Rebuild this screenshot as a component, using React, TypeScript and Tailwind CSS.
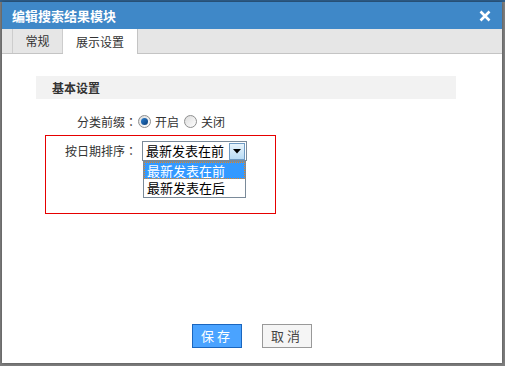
import React from "react";

const font = { fontFamily: '"Noto Sans CJK SC", "Noto Sans", sans-serif' };
const colon = { fontFamily: '"Noto Sans CJK TC", "Noto Sans CJK SC", sans-serif' };

function Radio({ checked }: { checked?: boolean }) {
  return (
    <span className="inline-flex h-[13px] w-[13px] items-center justify-center rounded-full border border-[#8e8f8f] bg-gradient-to-br from-[#dcdcdc] to-[#ffffff]">
      {checked && (
        <span className="h-[7px] w-[7px] rounded-full bg-gradient-to-br from-[#2b7fd0] to-[#0b3f7a]" />
      )}
    </span>
  );
}

export default function App() {
  return (
    <div className="relative h-[366px] w-[505px] overflow-hidden bg-[#7f7f7f]" style={font}>
      <div className="absolute left-0 top-0 h-[2px] w-full bg-[#2f5f8c]" />
      <div className="absolute left-[2px] top-[2px] flex h-[361px] w-[500px] flex-col bg-white shadow-[0_0_3px_rgba(0,0,0,0.4)]">
        {/* title */}
        <div className="flex h-[27px] items-center justify-between bg-[#3f88c8] pl-[10px] pr-[11px]">
          <span className="text-[13px] font-bold text-white">编辑搜索结果模块</span>
          <svg width="12" height="12" viewBox="0 0 12 12">
            <path d="M1.5 1.5 L10.5 10.5 M10.5 1.5 L1.5 10.5" stroke="#fff" strokeWidth="2.6" />
          </svg>
        </div>

        {/* tabs */}
        <div className="flex h-[25px] items-end border-b border-[#c4c4c4] bg-[#e6e6e6] pl-[10px]">
          <div className="flex h-[24px] w-[51px] items-center justify-center border-l border-r border-[#cdcdcd] text-[12px] text-[#333]">
            常规
          </div>
          <div className="-mb-px flex h-[25px] w-[75px] items-center justify-center border-r border-[#c4c4c4] bg-white text-[12px] text-[#333]">
            展示设置
          </div>
        </div>

        {/* body */}
        <div className="px-[34px] pt-[22px]">
          <div className="flex h-[23px] w-[420px] items-center bg-[#f2f2f2] pl-[16px] text-[12px] font-bold text-[#333]">
            基本设置
          </div>

          <div className="mt-[14px] flex h-[17px] items-center text-[12px] text-[#333]">
            <span className="w-[101px] text-right">
              分类前缀<span style={colon}>：</span>
            </span>
            <span className="ml-[1px] flex items-center gap-[4px]">
              <Radio checked />
              <span>开启</span>
            </span>
            <span className="ml-[5px] flex items-center gap-[4px]">
              <Radio />
              <span>关闭</span>
            </span>
          </div>

          <div className="ml-[9px] mt-[5px] h-[79px] w-[231px] border border-[#e60000] pt-[5px]">
            <div className="flex items-center text-[12px] text-[#333]">
              <span className="w-[91px] text-right">
                按日期排序<span style={colon}>：</span>
              </span>
              <div className="relative ml-[5px]">
                <div className="flex h-[20px] w-[105px] items-center border border-[#7a8a99] bg-white pl-[3px] text-[13px] text-black">
                  <span className="flex-1">最新发表在前</span>
                  <span className="mr-px flex h-[17px] w-[16px] items-center justify-center border border-[#6f9bc4] bg-gradient-to-b from-[#e8f4fc] to-[#b9dcf5]">
                    <svg width="8" height="5" viewBox="0 0 8 5">
                      <path d="M0 0 H8 L4 4.5 Z" fill="#000" />
                    </svg>
                  </span>
                </div>
                <div className="absolute left-px top-[20px] w-[103px] border border-[#7a8a99] bg-white text-[13px]">
                  <div className="flex h-[17px] items-center border border-dotted border-[#e8841a] bg-[#3399ff] pl-[2px] text-white">
                    最新发表在前
                  </div>
                  <div className="flex h-[18px] items-center pl-[3px] text-black">最新发表在后</div>
                </div>
              </div>
            </div>
          </div>
        </div>

        {/* footer */}
        <div className="mt-auto flex justify-center gap-[20px] pb-[15px]">
          <button className="h-[24px] w-[50px] border border-[#1a66bf] bg-[#4aa3ff] text-[13px] tracking-[3px] text-white">
            保存
          </button>
          <button className="h-[24px] w-[50px] border border-[#999] bg-[#f5f5f5] text-[13px] tracking-[3px] text-[#444]">
            取消
          </button>
        </div>
      </div>
    </div>
  );
}
